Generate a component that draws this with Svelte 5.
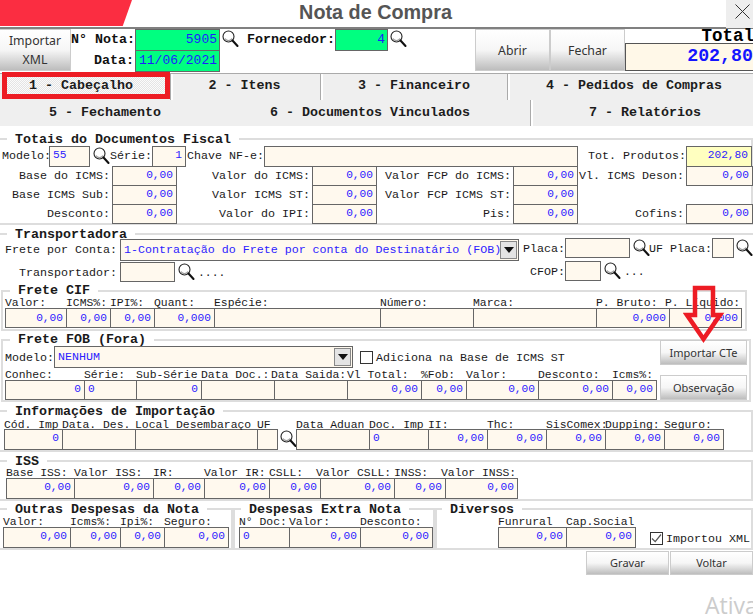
<script>
  const totals = [
    ['Base do ICMS:', '0,00', 'Valor do ICMS:', '0,00', 'Valor FCP do ICMS:', '0,00', 'Vl. ICMS Deson:', '0,00'],
    ['Base ICMS Sub:', '0,00', 'Valor ICMS ST:', '0,00', 'Valor FCP ICMS ST:', '0,00', '', null],
    ['Desconto:', '0,00', 'Valor do IPI:', '0,00', 'Pis:', '0,00', 'Cofins:', '0,00']
  ];
  const cif = [
    { w: 61, l: 'Valor:', v: '0,00' }, { w: 44, l: 'ICMS%:', v: '0,00' }, { w: 44, l: 'IPI%:', v: '0,00' },
    { w: 60, l: 'Quant:', v: '0,000' }, { w: 166, l: 'Espécie:', v: '' }, { w: 93, l: 'Número:', v: '' },
    { w: 123, l: 'Marca:', v: '' }, { w: 73, l: 'P. Bruto:', v: '0,000' }, { w: 72, l: 'P. Líquido:', v: '0,000', shift: -4 }
  ];
  const fob = [
    { w: 79, l: 'Conhec:', v: '0' }, { w: 52, l: 'Série:', v: '0', left: true }, { w: 65, l: 'Sub-Série', v: '0' },
    { w: 73, l: 'Data Doc.:', v: '' }, { w: 73, l: 'Data Saida:', v: '', shift: -3 }, { w: 74, l: 'Vl Total:', v: '0,00' },
    { w: 45, l: '%Fob:', v: '0,00' }, { w: 72, l: 'Valor:', v: '0,00' }, { w: 74, l: 'Desconto:', v: '0,00' },
    { w: 44, l: 'Icms%:', v: '0,00' }
  ];
  const impA = [
    { w: 58, l: 'Cód. Imp', v: '0' }, { w: 73, l: 'Data. Des.', v: '' },
    { w: 122, l: 'Local Desembaraço', v: '' }, { w: 20, l: 'UF', v: '' }
  ];
  const impB = [
    { w: 73, l: 'Data Aduan', v: '' }, { w: 59, l: 'Doc. Imp', v: '0', left: true }, { w: 59, l: 'II:', v: '0,00' },
    { w: 59, l: 'Thc:', v: '0,00' }, { w: 59, l: 'SisComex:', v: '0,00' }, { w: 59, l: 'Dupping:', v: '0,00' },
    { w: 59, l: 'Seguro:', v: '0,00' }
  ];
  const iss = [
    { w: 68, l: 'Base ISS:', v: '0,00' }, { w: 79, l: 'Valor ISS:', v: '0,00' }, { w: 51, l: 'IR:', v: '0,00' },
    { w: 65, l: 'Valor IR:', v: '0,00' }, { w: 51, l: 'CSLL:', v: '0,00' }, { w: 74, l: 'Valor CSLL:', v: '0,00', shift: -4 },
    { w: 51, l: 'INSS:', v: '0,00' }, { w: 72, l: 'Valor INSS:', v: '0,00', shift: -4 }
  ];
  const outras = [
    { w: 67, l: 'Valor:', v: '0,00' }, { w: 50, l: 'Icms%:', v: '0,00' }, { w: 44, l: 'Ipi%:', v: '0,00' }, { w: 64, l: 'Seguro:', v: '0,00' }
  ];
  const extra = [
    { w: 50, l: 'N° Doc:', v: '0', left: true }, { w: 71, l: 'Valor:', v: '0,00' }, { w: 72, l: 'Desconto:', v: '0,00' }
  ];
  const diversos = [
    { w: 68, l: 'Funrural', v: '0,00' }, { w: 69, l: 'Cap.Social', v: '0,00' }
  ];
</script>

{#snippet search()}
  <svg class="search" width="17" height="18" viewBox="0 0 17 18" aria-hidden="true">
    <circle cx="6.5" cy="6.5" r="5.5" fill="#fff" stroke="#222" stroke-width="1.1"/>
    <path d="M3 8.5a4 4 0 0 0 7 0" fill="none" stroke="#999" stroke-width="1.2"/>
    <path d="M10.5 10.5l5 5.5" stroke="#111" stroke-width="2.1" stroke-linecap="round"/>
  </svg>
{/snippet}

{#snippet arrowBtn()}
  <span class="drop"><svg width="10" height="6" viewBox="0 0 10 6" aria-hidden="true"><path d="M0 0h10L5 6z" fill="#111"/></svg></span>
{/snippet}

{#snippet columns(list, labelH, cellH)}
  {#each list as c}
    <div class="col" style:width="{c.w}px">
      <div class="head" style:height="{labelH}px"><span style:margin-left="{c.shift ?? 0}px">{c.l}</span></div>
      <div class="cell" class:left={c.left} style:height="{cellH}px">{c.v}</div>
    </div>
  {/each}
{/snippet}

<div class="form">
  <div class="titlebar">
    <div class="redmark"></div>
    <h1>Nota de Compra</h1>
    <div class="close">
      <svg width="15" height="15" viewBox="0 0 15 15" aria-hidden="true"><path d="M0.5 0.5l14 14M14.5 0.5l-14 14" stroke="#333" stroke-width="1" fill="none"/></svg>
    </div>
  </div>

  <div class="header">
    <button class="btn xml">Importar<br />XML</button>
    <div class="ident">
      <div class="idrow">
        <span class="idlabel nota">N° Nota:</span>
        <div class="green num">5905</div>
        {@render search()}
        <span class="idlabel forn">Fornecedor:</span>
        <div class="green num small">4</div>
        {@render search()}
      </div>
      <div class="idrow">
        <span class="idlabel nota">Data:</span>
        <div class="green num">11/06/2021</div>
      </div>
    </div>
    <button class="btn open">Abrir</button>
    <button class="btn open">Fechar</button>
    <div class="total">
      <div class="total-label">Total</div>
      <div class="total-box">202,80</div>
    </div>
  </div>

  <div class="tabs">
    <div class="tabrow r1">
      <div class="tab t1 active">1 - Cabeçalho</div>
      <div class="tab t2">2 - Itens</div>
      <div class="tab t3">3 - Financeiro</div>
      <div class="tab t4">4 - Pedidos de Compras</div>
    </div>
    <div class="tabrow r2">
      <div class="tab t5">5 - Fechamento</div>
      <div class="tab t6">6 - Documentos Vinculados</div>
      <div class="tab t7">7 - Relatórios</div>
    </div>
  </div>

  <fieldset class="fs totais">
    <legend>Totais do Documentos Fiscal</legend>
    <div class="firstrow">
      <span class="lb modelo">Modelo:</span>
      <div class="cell modelo-in left">55</div>
      <span class="searchbox">{@render search()}</span>
      <span class="lb serie">Série:</span>
      <div class="cell serie-in">1</div>
      <span class="lb chave">Chave NF-e:</span>
      <div class="cell chave-in"></div>
      <span class="lb totprod">Tot. Produtos:</span>
      <div class="cell totprod-in">202,80</div>
    </div>
    <div class="totgrid">
      {#each totals as row}
        {#each row as item, i}
          {#if i % 2 === 0}
            <span class="tl">{item}</span>
          {:else if item !== null}
            <div class="cell tc">{item}</div>
          {:else}
            <span></span>
          {/if}
        {/each}
      {/each}
    </div>
  </fieldset>

  <fieldset class="fs transp">
    <legend>Transportadora</legend>
    <div class="tbody">
      <div class="tleft">
        <div class="trow one">
          <span class="lb fl">Frete por Conta:</span>
          <div class="select frete">1-Contratação do Frete por conta do Destinatário (FOB){@render arrowBtn()}</div>
        </div>
        <div class="trow two">
          <span class="lb fl">Transportador:</span>
          <div class="cell tr-in"></div>
          <span class="searchbox">{@render search()}</span>
          <span class="dots">....</span>
        </div>
      </div>
      <div class="tright">
        <div class="trow">
          <span class="lb pl">Placa:</span>
          <div class="cell placa-in"></div>
          <span class="searchbox">{@render search()}</span>
          <span class="lb uf">UF Placa:</span>
          <div class="cell uf-in"></div>
          {@render search()}
        </div>
        <div class="trow cfop">
          <span class="lb pl">CFOP:</span>
          <div class="cell cfop-in"></div>
          <span class="searchbox">{@render search()}</span>
          <span class="dots">...</span>
        </div>
      </div>
    </div>
  </fieldset>

  <fieldset class="fs cif">
    <legend>Frete CIF</legend>
    <div class="cols cifcols">{@render columns(cif, 13, 20)}</div>
  </fieldset>

  <div class="fobwrap">
    <fieldset class="fs fob">
      <legend>Frete FOB (Fora)</legend>
      <div class="fobtop">
        <span class="lb fobm">Modelo:</span>
        <div class="select nenhum">NENHUM{@render arrowBtn()}</div>
        <span class="check"></span>
        <span class="lb">Adiciona na Base de ICMS ST</span>
      </div>
      <div class="cols fobcols">{@render columns(fob, 12, 20)}</div>
    </fieldset>
    <button class="btn side cte">Importar CTe</button>
    <button class="btn side obs">Observação</button>
  </div>

  <fieldset class="fs imp">
    <legend>Informações de Importação</legend>
    <div class="cols impcols">
      {@render columns(impA, 11, 21)}
      <div class="col gapsearch"><div class="head h11"></div>{@render search()}</div>
      {@render columns(impB, 11, 21)}
    </div>
  </fieldset>

  <fieldset class="fs issf">
    <legend>ISS</legend>
    <div class="cols isscols">{@render columns(iss, 10, 21)}</div>
  </fieldset>

  <div class="bottomrow">
    <fieldset class="fs outras">
      <legend>Outras Despesas da Nota</legend>
      <div class="cols outcols">{@render columns(outras, 11, 21)}</div>
    </fieldset>
    <fieldset class="fs extra">
      <legend>Despesas Extra Nota</legend>
      <div class="cols extcols">{@render columns(extra, 11, 21)}</div>
    </fieldset>
    <fieldset class="fs div">
      <legend>Diversos</legend>
      <div class="cols divcols">
        {@render columns(diversos, 11, 21)}
        <span class="check checked">
          <svg width="13" height="13" viewBox="0 0 13 13" aria-hidden="true"><path d="M2 6.5l3.2 3.2L11 2.5" fill="none" stroke="#555" stroke-width="1.2"/></svg>
        </span>
        <span class="lb xmlchk">Importou XML</span>
      </div>
    </fieldset>
  </div>

  <div class="actions">
    <button class="btn act">Gravar</button>
    <button class="btn act">Voltar</button>
  </div>

  <svg class="arrow" width="46" height="62" viewBox="0 0 46 62" aria-hidden="true">
    <path d="M12 3H30V30H37L20.5 54L4 30H12Z" fill="none" stroke="#ed1c24" stroke-width="4.5"/>
  </svg>
  <div class="watermark">Ativar</div>
</div>

<style>
  :global(body) { margin: 0; background: #fff; }
  .form {
    position: relative; width: 753px; height: 615px; overflow: hidden; background: #fff;
    font-family: "Liberation Mono", monospace; font-size: 11.4px; color: #1a1a1a;
  }
  .titlebar { display: grid; grid-template-columns: 1fr auto 1fr; height: 27px; border-bottom: 2px solid #808080; }
  .redmark { width: 132px; height: 26px; background: #fb2d41; clip-path: polygon(0 0, 100% 0, 93% 100%, 0 100%); }
  h1 { margin: 0 2px 0 0; font: bold 19.8px/24px "Liberation Sans", sans-serif; color: #555; }
  .close { justify-self: end; width: 27px; height: 28px; background: #eee; display: flex; align-items: flex-start; justify-content: flex-end; padding: 4px 3px 0 0; box-sizing: border-box; }

  .header { display: flex; height: 44px; border-bottom: 1px solid #aaa; box-sizing: content-box; }
  .btn {
    border: 1px solid #ccc; padding: 0; margin: 0; color: #333;
    font: 12.3px/19px "Noto Sans", "Open Sans", sans-serif;
    background: linear-gradient(#fff 0%, #f6f6f6 50%, #bdbdbd 100%);
  }
  .xml { width: 71px; height: 42px; border-left: 0; flex: none; }
  .ident { width: 404px; flex: none; }
  .idrow { display: flex; height: 21px; align-items: flex-start; }
  .idlabel { font-size: 13.33px; font-weight: bold; line-height: 21px; white-space: nowrap; color: #111; }
  .nota { width: 63px; text-align: right; }
  .forn { width: 88px; margin-left: 8px; text-align: right; }
  .green { box-sizing: border-box; height: 22px; background: #00ff80; border: 1px solid #666; color: #1c1cff; font-size: 13px; line-height: 19px; text-align: right; padding-right: 2px; }
  .num { width: 85px; margin-left: 1px; }
  .small { width: 53px; margin-left: 0; }
  .search { flex: none; margin: 1px 0 0 2px; display: block; }
  .open { width: 75px; height: 42px; flex: none; }
  .total { width: 129px; flex: none; display: flex; flex-direction: column; }
  .total-label { height: 14px; font-size: 17.5px; font-weight: bold; line-height: 15px; text-align: right; color: #000; }
  .total-box { box-sizing: border-box; height: 28px; background: #fff8e8; border: 1px solid #555; border-right: 0; margin-top: 0; font-size: 18.3px; line-height: 24px; text-align: right; color: #1414ff; padding-right: 1px; font-weight: bold; }

  .tabs { background: #efefef; height: 52px; }
  .tabrow { display: flex; height: 26px; font-size: 13.33px; font-weight: bold; color: #1c1c1c; }
  .tab { box-sizing: border-box; display: flex; align-items: center; justify-content: center; height: 26px; white-space: nowrap; }
  .tab + .tab { border-left: 1px solid #aaa; box-shadow: inset 2px 0 0 #fff; }
  .r1 .tab { padding-bottom: 3px; }
  .r2 .tab { padding-bottom: 1px; }
  .t1 { width: 170px; }
  .t2 { width: 150px; padding-right: 2px; }
  .t3 { width: 187px; }
  .t4 { width: 246px; padding-left: 7px; }
  .t5 { width: 210px; }
  .t6 { width: 320px; box-shadow: none !important; border-left: 0 !important; }
  .t7 { width: 223px; padding-left: 6px; }
  .r1 .active {
    height: 27px; margin: -2px 0 0 2px; width: 168px; border: 5px solid #ed1c24; padding: 0 10px 0 0;
    background: repeating-conic-gradient(#e4e4e4 0 25%, #fbfbfb 0 50%) 0 0 / 2px 2px;
  }

  .fs { margin: 0; padding: 0; border: 2px solid #ddd; min-width: 0; box-sizing: border-box; }
  legend { padding: 0 8px; font-size: 13.33px; line-height: 14px; font-weight: bold; color: #1a1a1a; white-space: nowrap; transform: translateY(1px); }
  .lb { white-space: nowrap; flex: none; font-size: 11.67px; }
  .cell {
    box-sizing: border-box; flex: none; background: #fff9ee; border: 1px solid #666; color: #2d22ff;
    text-align: right; padding-right: 3px; font-size: 11.2px; line-height: 16px; white-space: nowrap; overflow: hidden;
  }
  .cell.left { text-align: left; padding: 0 0 0 3px; }

  .totais { margin: 6px 0 0 -3px; border-left-width: 2px; }
  .totais legend { margin-left: 8px; }
  .firstrow { display: flex; height: 20px; padding-left: 1px; }
  .firstrow .lb { line-height: 21px; }
  .firstrow .cell { height: 21px; line-height: 17px; }
  .modelo { width: 47px; padding-left: 2px; }
  .modelo-in { width: 41px; }
  .searchbox { width: 17px; flex: none; margin-left: 1px; }
  .serie { width: 44px; text-align: right; }
  .serie-in { width: 34px; }
  .chave { width: 78px; text-align: right; }
  .chave-in { width: 314px; }
  .totprod { width: 108px; text-align: right; }
  .totprod-in { width: 66px; background: #ffffc0; }
  .totgrid { display: grid; grid-template-columns: 112px 64px 136px 64px 137px 64px 109px 66px; grid-auto-rows: 19px; padding-left: 1px; }
  .tl { text-align: right; font-size: 11.67px; line-height: 20px; white-space: nowrap; padding-right: 2px; }
  .tc { width: calc(100% + 1px); height: 20px; }

  .transp { margin: 2px -3px 0 -3px; border-width: 2px 0 0 0; }
  .transp legend { margin-left: 10px; }
  .tbody { display: flex; margin-top: -3px; height: 44px; padding-left: 3px; }
  .tleft { width: 519px; flex: none; padding-top: 1px; box-sizing: border-box; }
  .trow { display: flex; align-items: flex-start; }
  .trow .lb { line-height: 22px; }
  .trow.one { height: 23px; }
  .trow.one .lb { line-height: 23px; }
  .fl { width: 117px; text-align: right; margin-right: 3px; }
  .select {
    position: relative; box-sizing: border-box; flex: none; border: 1px solid #666; background: #fff9ee; color: #2d22ff;
    height: 22px; line-height: 20px; font-size: 11.65px; padding-left: 3px; white-space: nowrap;
  }
  .frete { width: 399px; }
  .drop {
    position: absolute; right: 1px; top: 1px; width: 17px; height: 18px; box-sizing: border-box;
    background: #e4e4e4; border: 1px solid #888; display: flex; align-items: center; justify-content: center;
  }
  .tr-in { width: 55px; height: 20px; }
  .dots { margin-left: 5px; line-height: 22px; white-space: nowrap; }
  .tright { flex: none; width: 234px; }
  .pl { width: 46px; text-align: right; }
  .placa-in { width: 65px; height: 20px; }
  .uf { width: 64px; text-align: right; }
  .uf-in { width: 22px; height: 20px; }
  .cfop { margin-top: 1px; }
  .cfop-in { width: 36px; height: 20px; }

  .cols { display: flex; align-items: flex-start; }
  .col { flex: none; }
  .head { display: flex; align-items: flex-end; white-space: nowrap; }
  .head span { line-height: 11px; transform: translateY(1px); }
  .col .cell { width: calc(100% + 1px); line-height: 17px; }

  .cif { margin: 2px 6px 0 1px; padding-bottom: 1px; }
  .cif legend { margin-left: 7px; transform: none; }
  .cifcols { margin-top: -3px; padding-left: 2px; }
  .cifcols .cell { line-height: 18px; }

  .fobwrap { position: relative; margin-top: 2px; }
  .fob { margin: 0 2px 0 1px; }
  .fob legend { margin-left: 7px; transform: none; }
  .fobtop { display: flex; align-items: center; height: 22px; margin-top: -1px; padding-left: 2px; }
  .fobtop .lb { padding-top: 1px; }
  .fobm { width: 49px; }
  .nenhum { width: 299px; margin-right: 7px; }
  .check { display: block; flex: none; box-sizing: border-box; width: 13px; height: 13px; border: 1px solid #333; background: #fff; margin-right: 3px; }
  .fobcols { padding-left: 2px; }
  .side { position: absolute; left: 660px; width: 87px; height: 25px; font-size: 11px; line-height: 20px; }
  .cte { top: 7px; }
  .obs { top: 42px; }

  .imp { margin: 2px 0 0 -3px; }
  .imp legend { margin-left: 8px; }
  .impcols { padding-left: 5px; }
  .impcols .head span { transform: translateY(2px); }
  .gapsearch { width: 19px; }
  .h11 { height: 11px; }
  .gapsearch .search { margin: 1px 0 0 3px; }

  .issf { margin: 2px 0 0 -3px; }
  .issf legend { margin-left: 8px; }
  .isscols { padding-left: 7px; }

  .bottomrow { display: flex; margin: 1px 0 0 -3px; }
  .outras { width: 236px; flex: none; }
  .outras legend { margin-left: 8px; }
  .outcols { padding-left: 4px; }
  .extra { width: 202px; flex: none; }
  .extra legend { margin-left: 6px; }
  .extcols { padding-left: 4px; }
  .div { width: 318px; flex: none; }
  .div legend { margin-left: 5px; }
  .divcols { padding-left: 61px; }
  .checked { margin: 16px 3px 0 15px; padding: 0; }
  .checked svg { display: block; margin: -1px; }
  .xmlchk { margin-top: 17px; line-height: 13px; }

  .actions { display: flex; justify-content: flex-end; gap: 1px; margin-top: 1px; }
  .act { width: 83px; height: 24px; font-size: 11px; line-height: 20px; }

  .arrow { position: absolute; left: 683px; top: 285px; }
  .watermark { position: absolute; left: 705px; top: 590px; font: 23px/30px "Open Sans", sans-serif; color: #ccc; white-space: nowrap; }
</style>
